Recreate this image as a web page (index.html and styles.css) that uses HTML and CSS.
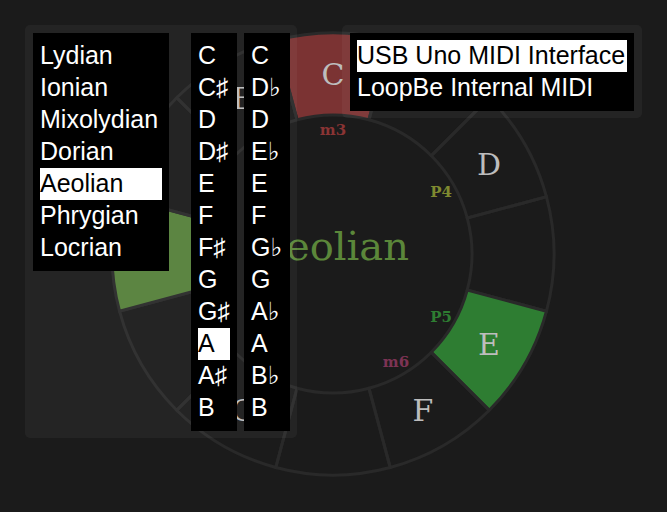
FILE: index.html
```html
<!DOCTYPE html>
<html>
<head>
<meta charset="utf-8">
<link rel="stylesheet" href="styles.css">
</head>
<body>
<div class="app">
  <svg class="wheel" width="667" height="512" viewBox="0 0 667 512">
    <g class="sectors">
      <path class="sector red" d="M275.8 40.53 A221 221 0 0 1 390.2 40.53 L368.98 119.74 A139 139 0 0 0 297.02 119.74 Z"/>
      <path class="sector" d="M390.2 40.53 A221 221 0 0 1 489.27 97.73 L431.29 155.71 A139 139 0 0 0 368.98 119.74 Z"/>
      <path class="sector" d="M489.27 97.73 A221 221 0 0 1 546.47 196.8 L467.26 218.02 A139 139 0 0 0 431.29 155.71 Z"/>
      <path class="sector" d="M546.47 196.8 A221 221 0 0 1 546.47 311.2 L467.26 289.98 A139 139 0 0 0 467.26 218.02 Z"/>
      <path class="sector green" d="M546.47 311.2 A221 221 0 0 1 489.27 410.27 L431.29 352.29 A139 139 0 0 0 467.26 289.98 Z"/>
      <path class="sector" d="M489.27 410.27 A221 221 0 0 1 390.2 467.47 L368.98 388.26 A139 139 0 0 0 431.29 352.29 Z"/>
      <path class="sector" d="M390.2 467.47 A221 221 0 0 1 275.8 467.47 L297.02 388.26 A139 139 0 0 0 368.98 388.26 Z"/>
      <path class="sector" d="M275.8 467.47 A221 221 0 0 1 176.73 410.27 L234.71 352.29 A139 139 0 0 0 297.02 388.26 Z"/>
      <path class="sector" d="M176.73 410.27 A221 221 0 0 1 119.53 311.2 L198.74 289.98 A139 139 0 0 0 234.71 352.29 Z"/>
      <path class="sector olive" d="M119.53 311.2 A221 221 0 0 1 119.53 196.8 L198.74 218.02 A139 139 0 0 0 198.74 289.98 Z"/>
      <path class="sector" d="M119.53 196.8 A221 221 0 0 1 176.73 97.73 L234.71 155.71 A139 139 0 0 0 198.74 218.02 Z"/>
      <path class="sector" d="M176.73 97.73 A221 221 0 0 1 275.8 40.53 L297.02 119.74 A139 139 0 0 0 234.71 155.71 Z"/>
    </g>
    <g class="notes">
      <text x="333" y="85">C</text>
      <text x="489" y="175">D</text>
      <text x="489" y="355">E</text>
      <text x="423" y="421">F</text>
      <text x="243" y="421">G</text>
      <text x="153" y="265">A</text>
      <text x="243" y="109">B</text>
    </g>
    <g class="intervals">
      <text class="i-m3" x="333" y="135">m3</text>
      <text class="i-p4" x="441" y="197">P4</text>
      <text class="i-p5" x="441" y="322">P5</text>
      <text class="i-m6" x="396" y="367">m6</text>
    </g>
    <text class="mode-title" x="333" y="260">Aeolian</text>
  </svg>

  <div class="panels">
    <div class="panel panel-left">
      <div class="list modes">
        <div class="item">Lydian</div>
        <div class="item">Ionian</div>
        <div class="item">Mixolydian</div>
        <div class="item">Dorian</div>
        <div class="item selected">Aeolian</div>
        <div class="item">Phrygian</div>
        <div class="item">Locrian</div>
      </div>
      <div class="list keys sharps">
        <div class="item">C</div>
        <div class="item">C♯</div>
        <div class="item">D</div>
        <div class="item">D♯</div>
        <div class="item">E</div>
        <div class="item">F</div>
        <div class="item">F♯</div>
        <div class="item">G</div>
        <div class="item">G♯</div>
        <div class="item selected">A</div>
        <div class="item">A♯</div>
        <div class="item">B</div>
      </div>
      <div class="list keys flats">
        <div class="item">C</div>
        <div class="item">D♭</div>
        <div class="item">D</div>
        <div class="item">E♭</div>
        <div class="item">E</div>
        <div class="item">F</div>
        <div class="item">G♭</div>
        <div class="item">G</div>
        <div class="item">A♭</div>
        <div class="item">A</div>
        <div class="item">B♭</div>
        <div class="item">B</div>
      </div>
    </div>
    <div class="panel panel-right">
      <div class="list devices">
        <div class="item selected">USB Uno MIDI Interface</div>
        <div class="item">LoopBe Internal MIDI</div>
      </div>
    </div>
  </div>
</div>
</body>
</html>
```

FILE: styles.css
```css
html, body {
  margin: 0;
  padding: 0;
  background: #1b1b1b;
}

.app {
  position: relative;
  width: 667px;
  height: 512px;
  overflow: hidden;
}

.wheel {
  position: absolute;
  left: 0;
  top: 0;
}

.sector {
  fill: none;
  stroke: #292929;
  stroke-width: 3;
}

.sector.red { fill: #7b3333; }
.sector.green { fill: #2e7d32; }
.sector.olive { fill: #55803a; }

.notes text {
  font-family: "DejaVu Serif", serif;
  font-size: 30px;
  fill: #bdbdbd;
  text-anchor: middle;
}

.intervals text {
  font-family: "DejaVu Serif", serif;
  font-size: 15px;
  font-weight: bold;
  text-anchor: middle;
}

.i-m3 { fill: #8a3434; }
.i-p4 { fill: #7f8a30; }
.i-p5 { fill: #2e7d32; }
.i-m6 { fill: #7d3354; }

.mode-title {
  font-family: "DejaVu Serif", serif;
  font-size: 40px;
  fill: #5b873a;
  text-anchor: middle;
}

.panels {
  position: relative;
  display: flex;
  justify-content: space-between;
  align-items: flex-start;
  padding: 25px;
}

.panel {
  background: rgba(255, 255, 255, 0.045);
  border-radius: 5px;
  display: flex;
  align-items: flex-start;
}

.panel-left {
  padding: 8px 7px 7px 8px;
}

.panel-right {
  padding: 8px 8px 7px 8px;
}

.list {
  background: #000;
  padding: 7px;
  font-family: "Liberation Sans", "DejaVu Sans", sans-serif;
  font-size: 25px;
  line-height: 30px;
  color: #fff;
  white-space: nowrap;
}

.item {
  height: 32px;
}

.item.selected {
  background: #fff;
  color: #000;
}

.modes {
  width: 122px;
  margin-right: 22px;
}

.keys {
  width: 32px;
}

.sharps {
  margin-right: 7px;
}

.devices {
  width: 270px;
}
```
